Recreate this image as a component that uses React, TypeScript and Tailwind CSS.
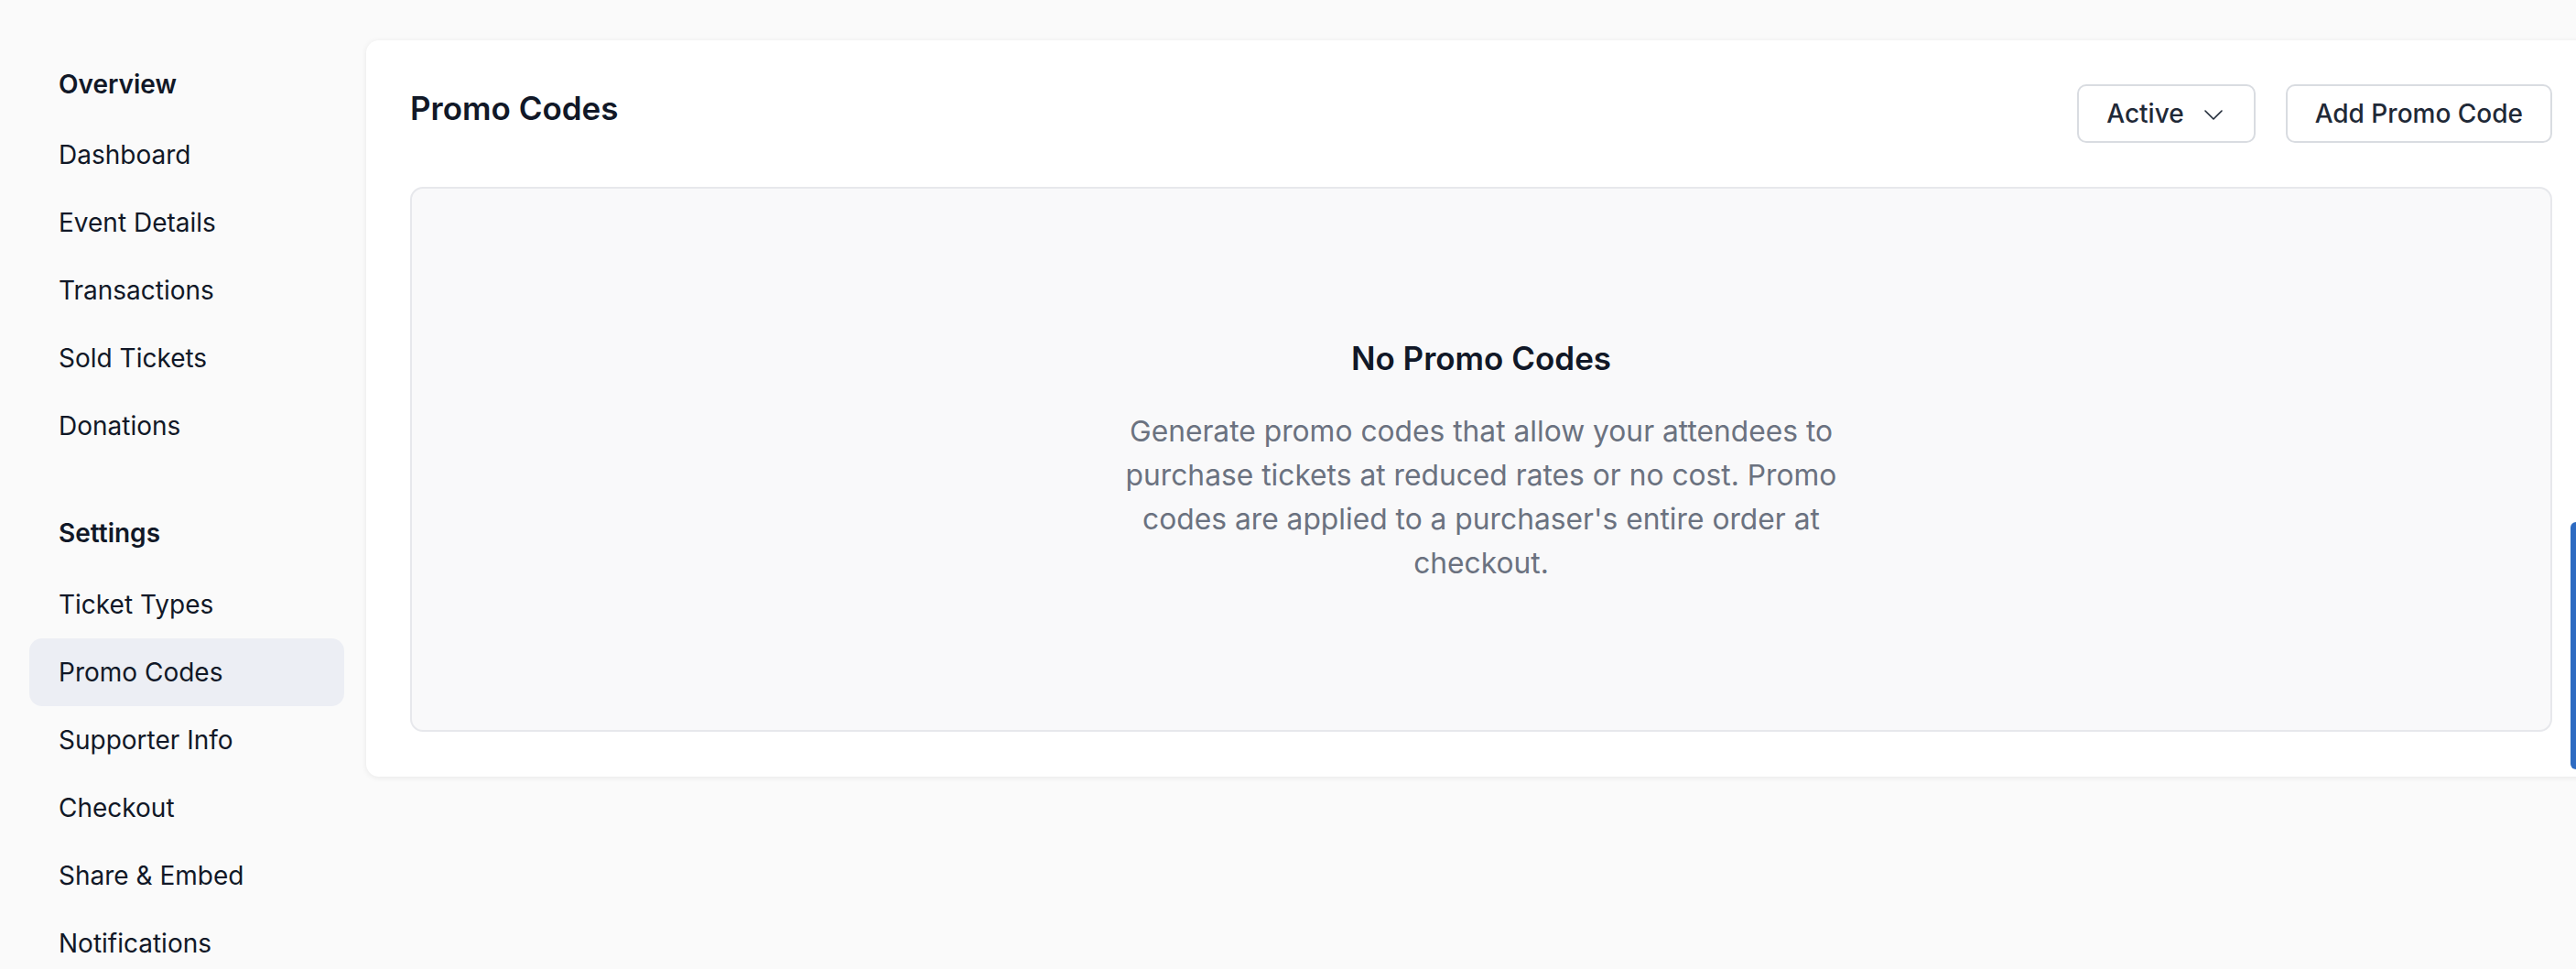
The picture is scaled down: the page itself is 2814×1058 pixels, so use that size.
const overviewLinks = ['Dashboard', 'Event Details', 'Transactions', 'Sold Tickets', 'Donations']
const settingsLinks = ['Ticket Types', 'Promo Codes', 'Supporter Info', 'Checkout', 'Share & Embed', 'Notifications']

function NavItem({ label, active }: { label: string; active?: boolean }) {
  return (
    <div
      className={`flex items-center h-[74px] px-[32px] rounded-[14px] text-[28px] text-[#111827] ${
        active ? 'bg-[#eceef4]' : ''
      }`}
    >
      {label}
    </div>
  )
}

function Sidebar() {
  return (
    <aside className="w-[400px] shrink-0 pl-[32px] pr-[24px] pt-[55px]">
      <div className="flex items-center h-[74px] px-[32px] text-[28px] font-semibold text-[#111827]">Overview</div>
      <nav className="mt-[3px] flex flex-col">
        {overviewLinks.map((l) => (
          <NavItem key={l} label={l} />
        ))}
      </nav>
      <div className="mt-[43px] flex items-center h-[74px] px-[32px] text-[28px] font-semibold text-[#111827]">
        Settings
      </div>
      <nav className="mt-[4px] flex flex-col">
        {settingsLinks.map((l) => (
          <NavItem key={l} label={l} active={l === 'Promo Codes'} />
        ))}
      </nav>
    </aside>
  )
}

export default function App() {
  return (
    <div className="relative flex w-[2814px] h-[1058px] overflow-hidden bg-[#fafafa] font-[Inter,sans-serif]">
      <Sidebar />
      <main className="pt-[44px]">
        <section className="w-[2436px] rounded-[14px] bg-white p-[48px] pb-[49px] shadow-[0_1px_6px_rgba(0,0,0,0.08)]">
          <div className="flex items-start justify-between h-[64px]">
            <h1 className="text-[35px] leading-[52px] font-semibold text-[#111827]">Promo Codes</h1>
            <div className="flex items-center gap-[33px]">
              <button className="flex items-center h-[64px] pl-[30px] pr-[34px] gap-[22px] rounded-[10px] border-2 border-[#d9dce1] bg-white text-[28px] font-medium text-[#1f2937]">
                Active
                <svg width="20" height="11" viewBox="0 0 20 11" fill="none" className="mt-[2px]">
                  <path d="M1 1l9 9 9-9" stroke="#1f2937" strokeWidth="1.6" strokeLinecap="round" strokeLinejoin="round" />
                </svg>
              </button>
              <button className="flex items-center h-[64px] px-[30px] rounded-[10px] border-2 border-[#d9dce1] bg-white text-[28px] font-medium text-[#1f2937]">
                Add Promo Code
              </button>
            </div>
          </div>
          <div className="mt-[48px] h-[595px] rounded-[14px] border-2 border-[#e7e8ec] bg-[#f9f9fa] flex flex-col items-center justify-center">
            <h2 className="text-[35px] leading-[52px] font-semibold text-[#111827]">No Promo Codes</h2>
            <p className="mt-[30px] max-w-[784px] text-center text-[31.75px] leading-[48px] text-[#6b7280]">
              Generate promo codes that allow your attendees to purchase tickets at reduced rates or no cost. Promo
              codes are applied to a purchaser's entire order at checkout.
            </p>
          </div>
        </section>
      </main>
      <div className="absolute right-0 top-[570px] w-[6px] h-[270px] rounded-l-[10px] bg-[#2e6bc2]" />
    </div>
  )
}
